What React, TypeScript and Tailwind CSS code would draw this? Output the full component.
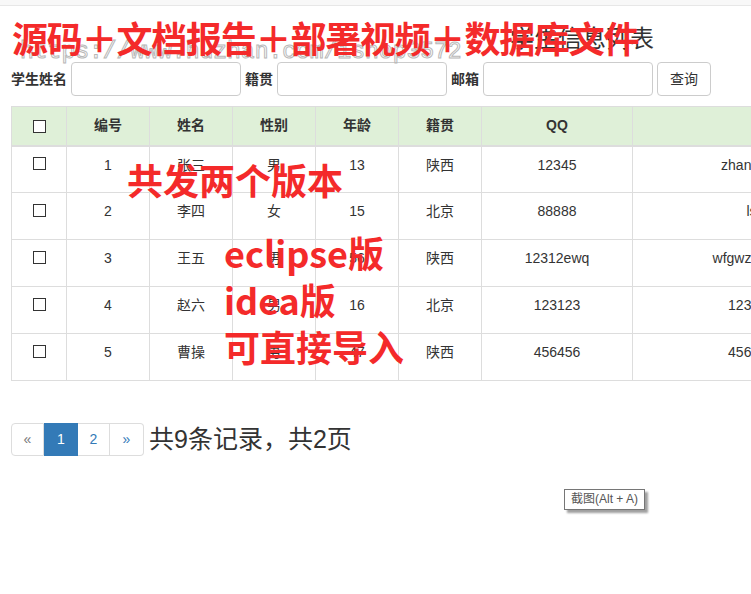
import React from "react"

const rows = [
  { id: 1, name: "张三", sex: "男", age: 13, city: "陕西", qq: "12345", email: "zhangsan@qq.com" },
  { id: 2, name: "李四", sex: "女", age: 15, city: "北京", qq: "88888", email: "ls@qq.com" },
  { id: 3, name: "王五", sex: "男", age: 56, city: "陕西", qq: "12312ewq", email: "wfgwzdd123@qq.com" },
  { id: 4, name: "赵六", sex: "男", age: 16, city: "北京", qq: "123123", email: "123123@qq.com" },
  { id: 5, name: "曹操", sex: "男", age: 47, city: "陕西", qq: "456456", email: "456456@qq.com" },
]

const font = "font-['Liberation_Sans','Noto_Sans_CJK_SC',sans-serif]"
const red = "font-['Noto_Sans_CJK_SC',sans-serif] font-bold text-[#f42a2a] leading-none whitespace-nowrap"

function Box() {
  return <span className="inline-block h-[13px] w-[13px] border border-[#333] bg-white align-middle" />
}

function Field({ label, className = "" }: { label: string; className?: string }) {
  return (
    <>
      <label className={"text-[14px] font-bold text-[#333] " + className}>{label}</label>
      <input className="h-[34px] w-[170px] rounded border border-[#ccc] bg-white px-3" />
    </>
  )
}

export default function App() {
  return (
    <div className={"relative h-[594px] w-[751px] overflow-hidden bg-white text-[#333] " + font}>
      <div className="h-[6px] border-b border-[#e7e7e7] bg-[#f8f8f8]" />

      <div className="pl-[11px]">
        <h3 className="ml-[499px] mt-[20px] mb-[10px] text-[24px] leading-[26px] whitespace-nowrap">学生信息列表</h3>

        <div className="flex items-center whitespace-nowrap">
          <Field label="学生姓名" className="mr-[4px]" />
          <Field label="籍贯" className="ml-[4px] mr-[4px]" />
          <Field label="邮箱" className="ml-[4px] mr-[4px]" />
          <button className="ml-[4px] h-[34px] w-[54px] rounded border border-[#ccc] bg-white text-[14px] text-[#333]">查询</button>
        </div>

        <table className="mt-[10px] w-[919px] table-fixed border-collapse text-center text-[14px]">
          <colgroup>
            <col className="w-[55px]" />
            <col className="w-[83px]" />
            <col className="w-[83px]" />
            <col className="w-[83px]" />
            <col className="w-[83px]" />
            <col className="w-[83px]" />
            <col className="w-[151px]" />
            <col className="w-[298px]" />
          </colgroup>
          <thead>
            <tr className="h-[39px] bg-[#dff0d8] font-bold">
              <th className="border border-[#ddd] border-b-2"><Box /></th>
              <th className="border border-[#ddd] border-b-2">编号</th>
              <th className="border border-[#ddd] border-b-2">姓名</th>
              <th className="border border-[#ddd] border-b-2">性别</th>
              <th className="border border-[#ddd] border-b-2">年龄</th>
              <th className="border border-[#ddd] border-b-2">籍贯</th>
              <th className="border border-[#ddd] border-b-2">QQ</th>
              <th className="border border-[#ddd] border-b-2">邮箱</th>
            </tr>
          </thead>
          <tbody>
            {rows.map((r) => (
              <tr key={r.id} className="h-[47px] align-top">
                <td className="border border-[#ddd] pt-[6px]"><Box /></td>
                <td className="border border-[#ddd] pt-[8px] leading-[20px]">{r.id}</td>
                <td className="border border-[#ddd] pt-[8px] leading-[20px]">{r.name}</td>
                <td className="border border-[#ddd] pt-[8px] leading-[20px]">{r.sex}</td>
                <td className="border border-[#ddd] pt-[8px] leading-[20px]">{r.age}</td>
                <td className="border border-[#ddd] pt-[8px] leading-[20px]">{r.city}</td>
                <td className="border border-[#ddd] pt-[8px] leading-[20px]">{r.qq}</td>
                <td className="border border-[#ddd] pt-[8px] leading-[20px]">{r.email}</td>
              </tr>
            ))}
          </tbody>
        </table>

        <div className="mt-[42px] flex items-center">
          <div className="flex h-[33px] text-[14px] text-[#337ab7]">
            <span className="flex w-[33px] items-center justify-center rounded-l border border-[#ddd] text-[#777]">«</span>
            <span className="flex w-[34px] items-center justify-center border border-[#337ab7] bg-[#337ab7] text-white">1</span>
            <span className="flex w-[32px] items-center justify-center border border-l-0 border-[#ddd]">2</span>
            <span className="flex w-[34px] items-center justify-center rounded-r border border-l-0 border-[#ddd]">»</span>
          </div>
          <span className="ml-[5px] text-[25px] leading-none whitespace-nowrap">共9条记录，共2页</span>
        </div>
      </div>

      {/* watermark + promo overlays */}
      <div className="absolute left-[20px] top-[41px] font-['Liberation_Mono',monospace] text-[23px] leading-none whitespace-nowrap text-transparent [-webkit-text-stroke:1px_#b8b8b8]">
        https://www.huzhan.com/ishop3572
      </div>
      <div className={"absolute left-[12px] top-[19px] text-[36px] tracking-[-1.2px] " + red}>源码＋文档报告＋部署视频＋数据库文件</div>
      <div className={"absolute left-[127px] top-[161px] text-[36px] " + red}>共发两个版本</div>
      <div className={"absolute left-[224px] top-[234px] text-[36px] " + red}>eclipse版</div>
      <div className={"absolute left-[224px] top-[281px] text-[36px] " + red}>idea版</div>
      <div className={"absolute left-[224px] top-[328px] text-[36px] " + red}>可直接导入</div>

      <div className="absolute left-[564px] top-[489px] border border-[#767676] bg-white px-[6px] py-[2px] text-[12px] leading-[15px] text-[#555] whitespace-nowrap shadow-[3px_3px_2px_#a0a0a0]">
        截图(Alt + A)
      </div>
    </div>
  )
}
